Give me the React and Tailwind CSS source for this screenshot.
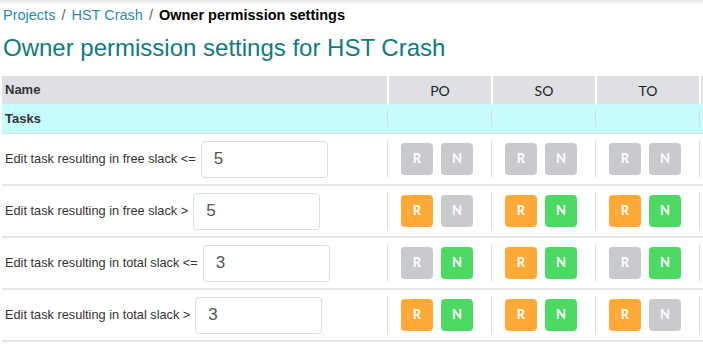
import React from "react";

const rows = [
  { label: "Edit task resulting in free slack <=", value: "5", perms: [[0, 0], [0, 0], [0, 0]] },
  { label: "Edit task resulting in free slack >", value: "5", perms: [[1, 0], [1, 1], [1, 1]] },
  { label: "Edit task resulting in total slack <=", value: "3", perms: [[0, 1], [1, 1], [0, 1]] },
  { label: "Edit task resulting in total slack >", value: "3", perms: [[1, 1], [1, 1], [1, 0]] },
];

const Badge = ({ letter, on }) => {
  const color = !on ? "bg-[#c8cacd]" : letter === "R" ? "bg-[#ffa938]" : "bg-[#4cd964]";
  return (
    <div
      className={`w-8 h-8 rounded-[4px] ${color} flex items-center justify-center text-white text-[13px] font-bold font-['Lato',sans-serif]`}
    >
      {letter}
    </div>
  );
};

const gridCols = "grid grid-cols-[385px_104px_104px_104px_1fr]";

const App = () => {
  return (
    <div className="w-[703px] h-[347px] overflow-hidden bg-white font-['Liberation_Sans',Arial,sans-serif] text-[#333]">
      <div className="h-[5px] bg-gradient-to-b from-[#e4e4e4] to-white" />
      <div className="px-[3px] pt-[2px] text-[14.5px] leading-[16px]">
        <span className="text-[#2b8bb8]">Projects</span>
        <span className="text-[#666] mx-[6px]">/</span>
        <span className="text-[#2b8bb8]">HST Crash</span>
        <span className="text-[#666] mx-[6px]">/</span>
        <span className="font-bold text-black">Owner permission settings</span>
      </div>
      <h1 className="px-[3px] mt-[11px] text-[24px] leading-[28px] text-[#0f7b80]">
        Owner permission settings for HST Crash
      </h1>

      <div className="ml-[2px] mt-[14px]">
        <div className={`${gridCols} h-[28px] text-[13px]`}>
          <div className="bg-[#dee0e4] font-bold px-[3px] flex items-center">Name</div>
          {["PO", "SO", "TO"].map((h) => (
            <div
              key={h}
              className="bg-[#dee0e4] border-l-2 border-white flex items-center justify-center text-[14px] text-[#222] font-['Lato',sans-serif]"
            >
              {h}
            </div>
          ))}
          <div className="bg-[#dee0e4] border-l-2 border-white" />
        </div>

        <div className={`${gridCols} h-[30px] bg-[#c6fcfd] border-b border-[#dcdfe3] text-[13px]`}>
          <div className="font-bold px-[3px] flex items-center">Tasks</div>
          {[0, 1, 2, 3].map((i) => (
            <div key={i} className="flex items-center">
              <div className="h-[17px] border-l border-[#d6dadd]" />
            </div>
          ))}
        </div>

        {rows.map((row) => (
          <div key={row.label} className={`${gridCols} h-[52px] border-b-2 border-[#e2e4e7]`}>
            <div className="flex items-center px-[3px] gap-[5px] text-[12.75px]">
              <span>{row.label}</span>
              <div className="w-[127px] h-[37px] border border-[#dcdcdc] rounded-[4px] flex items-center px-[12px] text-[17px] text-[#555]">
                {row.value}
              </div>
            </div>
            {row.perms.map((p, i) => (
              <div key={i} className="flex items-center">
                <div className="h-[38px] border-l border-[#dcdfe3] pl-[13px] flex items-center gap-2">
                  <Badge letter="R" on={p[0]} />
                  <Badge letter="N" on={p[1]} />
                </div>
              </div>
            ))}
            <div className="flex items-center">
              <div className="h-[38px] border-l border-[#dcdfe3]" />
            </div>
          </div>
        ))}
      </div>
    </div>
  );
};

export default App;
